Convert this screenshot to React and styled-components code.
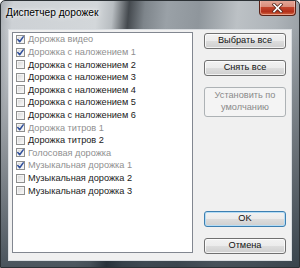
import React from "react";
import styled, { createGlobalStyle } from "styled-components";

const Global = createGlobalStyle`
  html, body { margin: 0; padding: 0; background: #ffffff; }
  body { width: 300px; height: 268px; overflow: hidden; font-family: "Liberation Sans", Arial, sans-serif; }
`;

const Window = styled.div`
  box-sizing: border-box;
  width: 300px;
  height: 268px;
  border: 1px solid #2c3135;
  border-radius: 5px 5px 0 0;
  display: flex;
  flex-direction: column;
  background:
    linear-gradient(180deg, rgba(0,0,0,0) 0px, rgba(0,0,0,0) 26px, rgba(30,38,46,0.4) 60%, rgba(30,42,52,0.75) 100%),
    linear-gradient(95deg, #a9aeb3 0%, #cdd1d5 4%, #d3d7da 30%, #b8bdc1 35%, #44494e 40%, #7e858b 45%, #9aa1a7 52%, #8f969c 62%, #bcc1c5 74%, #aeb4b9 86%, #8c9399 100%);
  overflow: hidden;
`;

const TitleBar = styled.div`
  height: 28px;
  flex: none;
  display: flex;
  align-items: flex-start;
  padding-left: 5px;
  padding-right: 3px;
`;

const TitleText = styled.div`
  margin-top: 6px;
  font-size: 10.2px;
  line-height: 12px;
  color: #000;
  text-shadow: 0 0 6px rgba(255,255,255,0.95), 0 0 3px rgba(255,255,255,0.9);
`;

const CloseButton = styled.div`
  margin-left: auto;
  margin-top: -1px;
  width: 37px;
  height: 16px;
  box-sizing: border-box;
  border: 1px solid #5a2217;
  border-top: none;
  border-radius: 0 0 4px 4px;
  background: linear-gradient(180deg, #e7ab9c 0%, #d98c7a 45%, #c2442c 50%, #b3301b 78%, #d46a44 100%);
  box-shadow: inset 0 0 0 1px rgba(255,210,200,0.55);
  display: flex;
  align-items: center;
  justify-content: center;
`;

const Client = styled.div`
  box-sizing: border-box;
  margin: 0 7px;
  width: 284px;
  height: 232px;
  flex: none;
  background: #f0f0f0;
  border: 1px solid #d9dde1;
  display: flex;
  padding: 2px 5px 0 3px;
  gap: 11px;
`;

const List = styled.div`
  box-sizing: border-box;
  width: 181px;
  height: 221px;
  background: #fff;
  border: 1px solid #828790;
  padding-top: 0.2px;
  display: flex;
  flex-direction: column;
`;

const Row = styled.div`
  height: 12.6px;
  display: flex;
  align-items: center;
  gap: 3px;
  padding-left: 3px;
  font-size: 9.2px;
  color: ${(p) => (p.$dim ? "#8f8f8f" : "#1a1a1a")};
  white-space: nowrap;
`;

const Box = styled.div`
  box-sizing: border-box;
  width: 9px;
  height: 9px;
  border: 1px solid #8e8f8f;
  background: linear-gradient(135deg, #d4d4d4 0%, #ebebeb 55%, #fbfbfb 100%);
  box-shadow: inset 0 0 0 1px #f4f4f4;
  display: flex;
  align-items: center;
  justify-content: center;
  flex: none;
`;

const Buttons = styled.div`
  width: 82px;
  height: 222px;
  display: flex;
  flex-direction: column;
  padding-top: 1px;
  box-sizing: border-box;
`;

const Group = styled.div`
  display: flex;
  flex-direction: column;
  gap: ${(p) => p.$gap}px;
  margin-top: ${(p) => (p.$bottom ? "auto" : "0")};
`;

const Btn = styled.div`
  box-sizing: border-box;
  height: ${(p) => (p.$tall ? 30 : 16)}px;
  border: 1px solid ${(p) => (p.$disabled ? "#adb2b5" : p.$default ? "#3c7fb1" : "#707070")};
  border-radius: 3px;
  background: ${(p) =>
    p.$disabled
      ? "#f4f4f4"
      : "linear-gradient(180deg, #f2f2f2 0%, #ebebeb 50%, #dddddd 51%, #cfcfcf 100%)"};
  box-shadow: inset 0 0 0 1px ${(p) => (p.$disabled ? "#f4f4f4" : p.$default ? "#b4dcf5" : "rgba(255,255,255,0.75)")};
  color: ${(p) => (p.$disabled ? "#8a8a8a" : "#111")};
  font-size: 9.2px;
  line-height: 11.7px;
  display: flex;
  align-items: center;
  justify-content: center;
  text-align: center;
  padding: 0 4px;
`;

const Bottom = styled.div`
  flex: 1;
`;

const Check = () => (
  <svg width="7" height="7" viewBox="0 0 7 7">
    <path d="M0.8 3.6 L2.7 5.8 L6.2 0.9" fill="none" stroke="#2f4f9c" strokeWidth="1.5" strokeLinecap="round" strokeLinejoin="round" />
  </svg>
);

const CloseX = () => (
  <svg width="11" height="10" viewBox="0 0 11 10">
    <path d="M2 1.5 L9 8.5 M9 1.5 L2 8.5" stroke="#5a2a20" strokeWidth="3.2" strokeLinecap="square" />
    <path d="M2 1.5 L9 8.5 M9 1.5 L2 8.5" stroke="#ffffff" strokeWidth="1.6" strokeLinecap="square" />
  </svg>
);

const items = [
  ["Дорожка видео", true],
  ["Дорожка с наложением 1", true],
  ["Дорожка с наложением 2", false],
  ["Дорожка с наложением 3", false],
  ["Дорожка с наложением 4", false],
  ["Дорожка с наложением 5", false],
  ["Дорожка с наложением 6", false],
  ["Дорожка титров 1", true],
  ["Дорожка титров 2", false],
  ["Голосовая дорожка", true],
  ["Музыкальная дорожка 1", true],
  ["Музыкальная дорожка 2", false],
  ["Музыкальная дорожка 3", false],
];

export default function App() {
  return (
    <>
      <Global />
      <Window>
        <TitleBar>
          <TitleText>Диспетчер дорожек</TitleText>
          <CloseButton>
            <CloseX />
          </CloseButton>
        </TitleBar>
        <Client>
          <List>
            {items.map(([label, checked]) => (
              <Row key={label} $dim={checked}>
                <Box>{checked && <Check />}</Box>
                <span>{label}</span>
              </Row>
            ))}
          </List>
          <Buttons>
            <Group $gap={11}>
              <Btn>Выбрать все</Btn>
              <Btn>Снять все</Btn>
              <Btn $tall $disabled>Установить по умолчанию</Btn>
            </Group>
            <Group $gap={11} $bottom>
              <Btn $default>OK</Btn>
              <Btn>Отмена</Btn>
            </Group>
          </Buttons>
        </Client>
        <Bottom />
      </Window>
    </>
  );
}
